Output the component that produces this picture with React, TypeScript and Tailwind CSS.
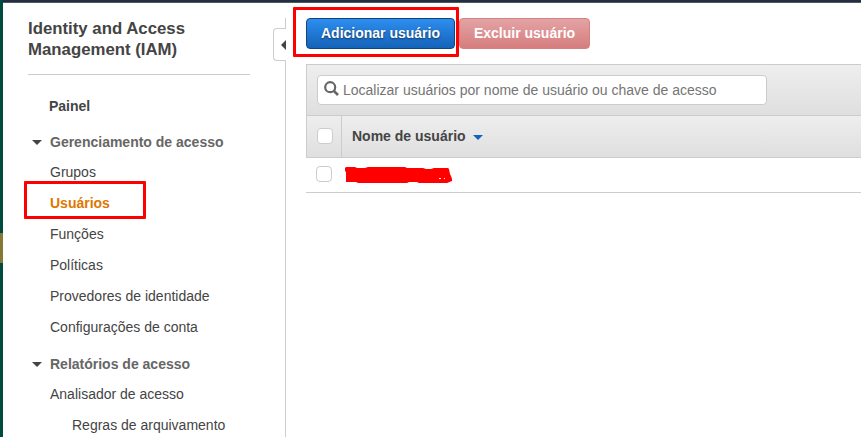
const caret = "M0 0H10L5 5Z";

function Item({ label, className = "" }: { label: string; className?: string }) {
  return <a className={`block h-[31px] pl-[47px] leading-[31px] ${className}`}>{label}</a>;
}

function Section({ label }: { label: string }) {
  return (
    <div className="mt-[6px] -mb-px flex h-[31px] items-center pl-[29px] font-bold text-[#666]">
      <svg width="10" height="5" className="mr-2 shrink-0" fill="#444">
        <path d={caret} />
      </svg>
      <span>{label}</span>
    </div>
  );
}

function Sidebar() {
  return (
    <nav className="relative w-[270px] shrink-0">
      <h1 className="ml-[25px] mt-[15px] w-[222px] border-b border-[#ccc] pb-[14px] text-[16.8px] leading-[21px] font-bold">
        Identity and Access
        <br />
        Management (IAM)
      </h1>
      <div className="pt-[16px]">
        <Item label="Painel" className="-mb-px -ml-px font-bold" />
        <Section label="Gerenciamento de acesso" />
        <Item label="Grupos" />
        <div className="relative">
          <Item label="Usuários" className="font-bold text-[#e07700]" />
          <div className="absolute top-[-7px] left-[21px] h-[38px] w-[122px] rounded-[1px] border-3 border-[#f00]" />
        </div>
        <Item label="Funções" />
        <Item label="Políticas" />
        <Item label="Provedores de identidade" />
        <Item label="Configurações de conta" />
        <Section label="Relatórios de acesso" />
        <Item label="Analisador de acesso" />
        <Item label="Regras de arquivamento" className="ml-[22px]" />
      </div>
    </nav>
  );
}

function Divider() {
  return (
    <div className="flex w-[13px] shrink-0 flex-col pt-[15px]">
      <div className="ml-auto h-[10px] w-px bg-[#ccc]" />
      <div className="flex h-[33px] items-center justify-end rounded-l-[4px] border border-r-0 border-[#ccc]">
        <svg width="5" height="10" fill="#444">
          <path d="M5 0V10L0 5Z" />
        </svg>
      </div>
      <div className="ml-auto w-px grow bg-[#ccc]" />
    </div>
  );
}

function Checkbox() {
  return <span className="block size-4 rounded-[4px] border border-[#ccc] bg-white" />;
}

export default function App() {
  return (
    <div className="flex h-[437px] w-[861px] flex-col overflow-hidden bg-white font-['Liberation_Sans',Arial,sans-serif] text-[14px] text-[#444]">
      <header className="h-[3px] shrink-0 border-b border-[#4f5966] bg-[#232f3e]" />
      <div className="flex min-h-0 grow">
        <div className="-mt-[3px] w-[3px] shrink-0 bg-[#004b40] pt-[233px]">
          <div className="h-[30px] bg-[#857a35]" />
        </div>
        <Sidebar />
        <Divider />
        <main className="ml-[20px] min-w-0 grow pt-[15px]">
          <div className="flex h-[31px] gap-1 font-bold text-white">
            <div className="relative">
              <button className="block h-[31px] w-[149px] rounded-[4px] border border-[#124580] bg-linear-to-b from-[#2e8ef0] to-[#1463b8] [text-shadow:0_1px_2px_#0008]">
                Adicionar usuário
              </button>
              <div className="absolute top-[-11px] left-[-13px] z-10 h-[50px] w-[166px] rounded-[1px] border-3 border-[#f00]" />
            </div>
            <button className="h-[31px] w-[131px] rounded-[4px] border border-[#d58081] bg-linear-to-b from-[#e3a3a4] to-[#d67d7e]">
              Excluir usuário
            </button>
          </div>
          <section className="mt-[15px]">
            <div className="h-[51px] border-t border-l border-[#ccc] bg-linear-to-b from-[#eee] to-[#dfdfdf] pt-[10px] pl-[10px]">
              <div className="flex h-[30px] w-[450px] items-center rounded-[4px] border border-[#ccc] bg-white pl-[6px] text-[#757575]">
                <svg width="15" height="15" viewBox="0 0 15 15" fill="none" stroke="#666" className="mt-[-3px] mr-[4px]">
                  <circle cx="6.2" cy="6.2" r="5" strokeWidth="2.2" />
                  <path d="M9.8 9.8L14 14" strokeWidth="2.6" />
                </svg>
                <span>Localizar usuários por nome de usuário ou chave de acesso</span>
              </div>
            </div>
            <div className="flex h-[43px] border-y border-l border-[#ccc] bg-linear-to-b from-[#eee] to-[#dfdfdf]">
              <div className="w-[35px] border-r border-[#ccc] pt-[12px] pl-[10px]">
                <Checkbox />
              </div>
              <div className="flex items-center pl-[10px] font-bold">
                <span>Nome de usuário</span>
                <svg width="10" height="5" className="mt-px ml-[7px]" fill="#1166bb">
                  <path d={caret} />
                </svg>
              </div>
            </div>
            <div className="flex h-[35px] border-b border-[#ccc] pt-[8px] pl-[10px]">
              <Checkbox />
              <svg width="109" height="18" viewBox="0 0 109 18" className="ml-[13px]" fill="#f00">
                <path d="M0 2Q0 1 2 1H10L12 2H20L23 1H60L62 2H78L81 3H86L89 2H103L104 3L105 8L106 10L107 13V15L102 17H74L72 16H64L62 17H13L11 16H1V6L0 5Z" />
                <path d="M94 12.5H96M99 12.5H100" stroke="#fff" strokeWidth="1" />
              </svg>
            </div>
          </section>
        </main>
      </div>
    </div>
  );
}
